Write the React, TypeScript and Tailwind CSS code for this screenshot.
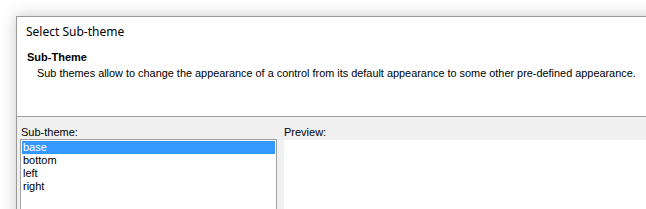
import React from "react";

export default function App() {
  const items = ["base", "bottom", "left", "right"];
  return (
    <div className="w-[646px] h-[209px] overflow-hidden bg-white pt-4 pl-4 flex items-start" style={{ fontFamily: '"Liberation Sans", Arial, sans-serif' }}>
      <div className="flex-1 h-[260px] shrink-0 flex flex-col border-l border-t border-[#9a9a9a] bg-white shadow-[0_0_14px_rgba(0,0,0,0.22)] -mr-4">
        <div className="h-[99px] flex flex-col bg-white">
          <div className="h-[29px] flex items-center pl-[9px] pt-[1px] text-[12px] text-black" style={{ fontFamily: '"Noto Sans", "Open Sans", sans-serif' }}>
            Select Sub-theme
          </div>
          <div className="pl-[10px] pt-[4px] text-[11px] leading-[14px] font-bold text-black">Sub-Theme</div>
          <div className="pl-[20px] pt-[2px] text-[10.9px] leading-[14px] text-black">
            Sub themes allow to change the appearance of a control from its default appearance to some other pre-defined appearance.
          </div>
        </div>
        <div className="flex-1 flex bg-[#f0f0f0] border-t border-[#a0a0a0] pl-[3px] pt-[9px]">
          <div className="flex flex-col w-[257px]">
            <div className="h-[13px] text-[11px] leading-[13px] text-black pl-[1px]">Sub-theme:</div>
            <div className="flex-1 border border-[#a0a0a0] bg-white p-[1px]">
              {items.map((it, i) => (
                <div
                  key={it}
                  className={
                    i === 0
                      ? "h-[13px] leading-[13px] text-[11px] pl-[1px] bg-[#3399ff] text-white"
                      : "h-[13px] leading-[13px] text-[11px] pl-[1px] text-black"
                  }
                >
                  {it}
                </div>
              ))}
            </div>
          </div>
          <div className="flex flex-col flex-1 ml-[7px]">
            <div className="h-[14px] text-[11px] leading-[13px] text-black">Preview:</div>
            <div className="flex-1 bg-white"></div>
          </div>
        </div>
      </div>
    </div>
  );
}
